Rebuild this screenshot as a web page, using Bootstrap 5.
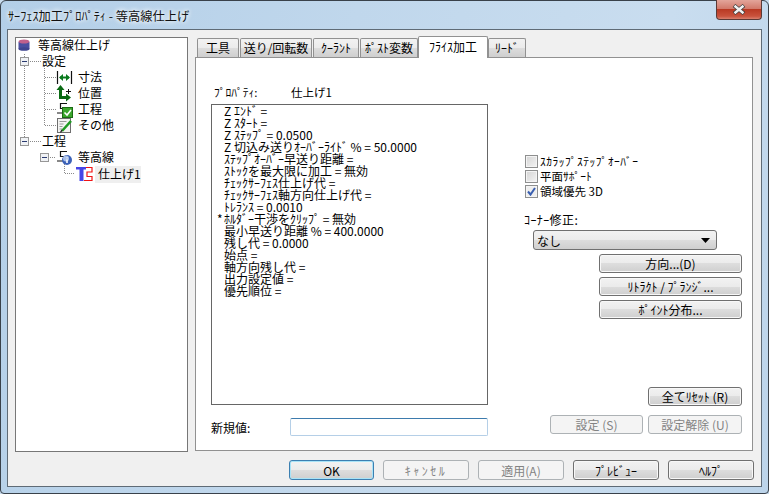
<!DOCTYPE html>
<html lang="ja">
<head>
<meta charset="utf-8">
<title>サーフェス加工プロパティ</title>
<link href="https://cdn.jsdelivr.net/npm/bootstrap@5.3.0/dist/css/bootstrap.min.css" rel="stylesheet">
<style>
html,body{margin:0;width:769px;height:494px;overflow:hidden;background:#c8dcee}
body,.wbtn,.wsel,.winput{font-family:"Noto Sans CJK JP","Liberation Sans",sans-serif;font-size:12px;line-height:13px;color:#000}
.wframe{width:769px;height:494px;border:1px solid #39414a;border-radius:6px 6px 4px 4px;background:linear-gradient(105deg,#b3cfe8 0%,#c0d7ec 40%,#c9ddef 75%,#bcd4ea 100%);padding:0 6px 6px;display:flex;flex-direction:column}
.wtitle{height:28px;flex:none;display:flex;align-items:flex-start}
.wtitle-text{padding:8px 0 0 1px;font-size:12.25px;line-height:14px;color:#111;text-shadow:0 0 5px #fff,0 0 5px #fff}
.wclose{width:46px;height:20px;margin:-1px 0 0 auto;border:1px solid #5b3a36;border-top:0;border-radius:0 0 4px 4px;background:linear-gradient(#e3a59a 0%,#d27a6b 45%,#b93a24 50%,#c9523c 85%,#d9806e 100%);display:flex;align-items:center;justify-content:center}
.wclient{flex:1;border:1px solid #5f6b76;background:#f0f0f0;padding:6px 7px 0;display:flex;flex-direction:column}
.wtop{display:flex;gap:7px;height:415px}
.wtree{width:173px;height:415px;margin-top:1px;background:#fff;border:1px solid #777;flex:none}
.trow{height:16px;display:flex;align-items:center;white-space:nowrap;line-height:14px;font-size:12px}
.trow svg{flex:none;overflow:visible;display:block}
.trow span{margin-bottom:3px}
.trow span.tsel{background:#efefef;padding:1px 3px 2px;margin-bottom:0;width:46px}
.wtabs{width:558px;flex:none;display:flex;flex-direction:column}
.wtabs .nav-tabs{border:0;padding-left:2px;height:21px;align-items:flex-end;flex-wrap:nowrap;margin-bottom:0}
.wtabs .nav-link{height:19px;margin:0 1px 0 0;padding:2px 0 0;text-align:center;border:1px solid #919191;border-bottom:0;border-radius:2px 2px 0 0;background:linear-gradient(#f2f2f2 0%,#ebebeb 50%,#dddddd 50%,#cfcfcf 100%);color:#000;line-height:14px;font-size:12px;white-space:nowrap}
.wtabs .nav-link.active{height:22px;margin:0 0 -1px -1px;padding-top:3px;background:#fff;border-color:#919191;color:#000;position:relative;z-index:2}
.tw1{width:42px}.tw2{width:72px}.tw3{width:46px}.tw4{width:58px}.tw5{width:70px}.tw6{width:38px}
.wpanel{height:394px;background:#fff;border:1px solid #919191;padding:28px 10px 0 15px;display:flex}
.wleft{width:277px;flex:none}
.wprop{height:18px;display:flex;font-size:11.5px}
.wprop-k{width:80px;padding-left:3px}
.wlist{height:301px;border:1px solid #666;padding:0;white-space:nowrap}
.wline{height:12px;line-height:12px;padding-left:5px;display:flex;font-size:12px}
.wmark{width:7px;flex:none}
.wnew{display:flex;align-items:center;margin-top:13px}
.wnew-k{width:79px;flex:none}
.winput.form-control{width:198px;height:18px;min-height:0;padding:0 3px;border:1px solid #b5cfe7;border-top-color:#3d7bad;border-radius:2px;background:#fff;box-shadow:none}
.wright{width:218px;margin-left:36px;flex:none;display:flex;flex-direction:column;height:349px}
.wchk{height:15px;display:flex;align-items:center;margin:0;padding:0;min-height:0}
.wchk:first-child{margin-top:68px}
.wchk .form-check-input{width:13px;height:13px;margin:0 2px 0 1px;float:none;flex:none;border:1px solid #8e8f8f;border-radius:0;background:linear-gradient(135deg,#d4d4d4,#f4f4f4);box-shadow:inset 0 0 0 1px #f4f4f4;opacity:1}
.wchk .form-check-input:checked{background-color:#eee;background-image:url("data:image/svg+xml,%3Csvg xmlns='http://www.w3.org/2000/svg' viewBox='0 0 13 13'%3E%3Cpath d='M3 6.500l2.500 3L10 3' fill='none' stroke='%233a5fb0' stroke-width='2'/%3E%3C/svg%3E");background-size:13px 13px;background-position:center;border-color:#8e8f8f}
.wchk .form-check-label{line-height:15px;font-size:11.5px;opacity:1}
.wtight{letter-spacing:.5px}
.wcorner{height:13px;margin-top:14px;margin-bottom:1px;font-size:12px;letter-spacing:.4px}
.wsel.form-select{width:184px;height:20px;min-height:0;margin:3px 0 0 9px;padding:0 3px;border:1px solid #707070;border-radius:3px;line-height:17px;box-shadow:none;background-color:#e6e6e6;background-image:url("data:image/svg+xml,%3Csvg xmlns='http://www.w3.org/2000/svg' viewBox='0 0 9 5'%3E%3Cpath d='M0 0h9L4.500 5z'/%3E%3C/svg%3E"),linear-gradient(#f2f2f2 0%,#ebebeb 50%,#dddddd 50%,#cfcfcf 100%);background-repeat:no-repeat;background-size:9px 5px,100% 100%;background-position:right 6px center,0 0}
.wbtn.btn{height:19px;padding:0;border:1px solid #707070;border-radius:3px;line-height:16px;color:#000;background:linear-gradient(#f2f2f2 0%,#ebebeb 50%,#dddddd 50%,#cfcfcf 100%);box-shadow:inset 0 0 0 1px #f8f8f8;white-space:nowrap;font-size:12px;opacity:1}
.wbtn.btn.disabled,.wbtn.btn:disabled{background:#f4f4f4;border-color:#adb2b5;color:#838383;box-shadow:none;opacity:1}
.wbtn.wdef{border-color:#3c7fb1;box-shadow:inset 0 0 0 1px #a8e3f7}
.wb-wide{width:143px;margin-left:75px;margin-top:4px}
.wb-mid{width:94px}
.wb-set{width:93px}
.wbot{margin-top:auto;margin-bottom:1px}
.wbotrow{display:flex;justify-content:flex-end;gap:5px;margin-top:9px}
.wfoot{display:flex;justify-content:flex-end;gap:9px;margin-top:9px}
.wfoot .wbtn{width:86px;height:20px;line-height:17px}
.wfoot .wdef{width:85px}
.wwide-kana{letter-spacing:2.500px}
</style>
</head>
<body>
<div class="wframe">
  <div class="wtitle">
    <div class="wtitle-text">ｻｰﾌｪｽ加工ﾌﾟﾛﾊﾟﾃｨ - 等高線仕上げ</div>
    <div class="wclose"><svg width="16" height="11" viewBox="0 0 16 11"><path d="M3 1.500L13 9.500M13 1.500L3 9.500" stroke="#3d3d3d" stroke-width="4"/><path d="M3.500 1.800L12.500 9.200M12.500 1.800L3.500 9.200" stroke="#f2f2f2" stroke-width="2.400"/></svg></div>
  </div>
  <div class="wclient">
    <div class="wtop">
      <div class="wtree">
        <div class="trow"><svg width="22" height="16" viewBox="0 0 22 16"><rect x="2.500" y="4" width="11" height="7" fill="#4a4fa0"/><ellipse cx="8" cy="11" rx="5.500" ry="1.800" fill="#3f4590"/><ellipse cx="8" cy="3.500" rx="5.500" ry="2" fill="#c0608c"/></svg><span>等高線仕上げ</span></div>
        <div class="trow"><svg width="26" height="16" viewBox="0 0 26 16"><path d="M8.500 0V3M8.500 12V16M14 7.500H25" stroke="#8a8a8a" stroke-dasharray="1 1" fill="none"/><path d="M28.500 12V16" stroke="#8a8a8a" stroke-dasharray="1 1"/><rect x="4.500" y="3.500" width="8" height="8" fill="#f0f2f5" stroke="#979797"/><path d="M6 7.500h5" stroke="#2a3a70"/></svg><span>設定</span></div>
        <div class="trow"><svg width="62" height="16" viewBox="0 0 62 16"><path d="M8.500 0V16M28.500 0V16M29 7.500H40" stroke="#8a8a8a" stroke-dasharray="1 1" fill="none"/><path d="M41.500 1V14M55.500 1V14" stroke="#111" stroke-width="1.200"/><path d="M44 7.500H53" stroke="#0a7a1e" stroke-width="2"/><path d="M47 4L43 7.500L47 11zM50 4L54 7.500L50 11z" fill="#0a7a1e"/></svg><span>寸法</span></div>
        <div class="trow"><svg width="62" height="16" viewBox="0 0 62 16"><path d="M8.500 0V16M28.500 0V16M29 7.500H40" stroke="#8a8a8a" stroke-dasharray="1 1" fill="none"/><path d="M44.500 3V11.500H51" stroke="#0a6a14" stroke-width="3" fill="none"/><path d="M40.500 4L44.500 -1L48.500 4zM50 7.500L55 11.500L50 15.500z" fill="#0a6a14"/><path d="M50 5.500h5M52.500 3v5" stroke="#111"/></svg><span>位置</span></div>
        <div class="trow"><svg width="62" height="16" viewBox="0 0 62 16"><path d="M8.500 0V16M28.500 0V16M29 7.500H40" stroke="#8a8a8a" stroke-dasharray="1 1" fill="none"/><path d="M44 1.500H51M44.500 1V6.500H51V11H41" stroke="#111" stroke-width="1.200" fill="none"/><rect x="46.500" y="5.500" width="10" height="10" fill="#3aa52c" stroke="#1a6a14"/><path d="M48.500 10.500L51 13L55 8" stroke="#fff" stroke-width="1.600" fill="none"/></svg><span>工程</span></div>
        <div class="trow"><svg width="62" height="16" viewBox="0 0 62 16"><path d="M8.500 0V16M28.500 0V7.500H40" stroke="#8a8a8a" stroke-dasharray="1 1" fill="none"/><rect x="41.500" y="0.500" width="13" height="14" fill="#f4f4f2" stroke="#6e6e6e"/><path d="M43.500 3.500h7M43.500 6h4M43.500 8.500h3M43.500 11h3" stroke="#9a9a9a"/><path d="M46 13L55 3" stroke="#1f9a22" stroke-width="2.600"/><path d="M44.500 14.500L46 12" stroke="#222" stroke-width="1.400"/></svg><span>その他</span></div>
        <div class="trow"><svg width="26" height="16" viewBox="0 0 26 16"><path d="M8.500 0V3M14 7.500H25" stroke="#8a8a8a" stroke-dasharray="1 1" fill="none"/><rect x="4.500" y="3.500" width="8" height="8" fill="#f0f2f5" stroke="#979797"/><path d="M6 7.500h5" stroke="#2a3a70"/></svg><span>工程</span></div>
        <div class="trow"><svg width="62" height="16" viewBox="0 0 62 16"><path d="M34 7.500H40" stroke="#8a8a8a" stroke-dasharray="1 1" fill="none"/><path d="M48.500 12V16" stroke="#8a8a8a" stroke-dasharray="1 1"/><rect x="24.500" y="3.500" width="8" height="8" fill="#f0f2f5" stroke="#979797"/><path d="M26 7.500h5" stroke="#2a3a70"/><path d="M44 1.500H51M44.500 1V6.500H51V11H41" stroke="#111" stroke-width="1.200" fill="none"/><circle cx="51" cy="10" r="5" fill="#3c62b8"/><circle cx="50" cy="8.500" r="3" fill="#a9c0ea"/><path d="M51 7.500v.8M51 9.500v3.500" stroke="#fff" stroke-width="1.600"/></svg><span>等高線</span></div>
        <div class="trow"><svg width="79" height="16" viewBox="0 0 79 16"><path d="M48.500 0V7.500H59" stroke="#8a8a8a" stroke-dasharray="1 1" fill="none"/><path d="M60 1H70V3.500H67.500V15H63.500V3.500H60z" fill="#4646e6"/><path d="M70 1.500H76V6H71V10.500H76V14.500H68" stroke="#f01414" stroke-width="1.200" fill="none"/></svg><span class="tsel">仕上げ1</span></div>
      </div>
      <div class="wtabs">
        <ul class="nav nav-tabs">
          <li class="nav-item"><a class="nav-link tw1" href="#">工具</a></li>
          <li class="nav-item"><a class="nav-link tw2" href="#">送り/回転数</a></li>
          <li class="nav-item"><a class="nav-link tw3" href="#">ｸｰﾗﾝﾄ</a></li>
          <li class="nav-item"><a class="nav-link tw4" href="#">ﾎﾟｽﾄ変数</a></li>
          <li class="nav-item"><a class="nav-link tw5 active" href="#">ﾌﾗｲｽ加工</a></li>
          <li class="nav-item"><a class="nav-link tw6" href="#">ﾘｰﾄﾞ</a></li>
        </ul>
        <div class="wpanel">
          <div class="wleft">
            <div class="wprop"><div class="wprop-k">ﾌﾟﾛﾊﾟﾃｨ:</div><div>仕上げ1</div></div>
            <div class="wlist">
              <div class="wline"><span class="wmark"></span><span>Z ｴﾝﾄﾞ =</span></div>
              <div class="wline"><span class="wmark"></span><span>Z ｽﾀｰﾄ =</span></div>
              <div class="wline"><span class="wmark"></span><span>Z ｽﾃｯﾌﾟ = 0.0500</span></div>
              <div class="wline"><span class="wmark"></span><span>Z 切込み送りｵｰﾊﾞｰﾗｲﾄﾞ % = 50.0000</span></div>
              <div class="wline"><span class="wmark"></span><span>ｽﾃｯﾌﾟｵｰﾊﾞｰ早送り距離 =</span></div>
              <div class="wline"><span class="wmark"></span><span>ｽﾄｯｸを最大限に加工 = 無効</span></div>
              <div class="wline"><span class="wmark"></span><span>ﾁｪｯｸｻｰﾌｪｽ仕上げ代 =</span></div>
              <div class="wline"><span class="wmark"></span><span>ﾁｪｯｸｻｰﾌｪｽ軸方向仕上げ代 =</span></div>
              <div class="wline"><span class="wmark"></span><span>ﾄﾚﾗﾝｽ = 0.0010</span></div>
              <div class="wline"><span class="wmark">*</span><span>ﾎﾙﾀﾞｰ干渉をｸﾘｯﾌﾟ = 無効</span></div>
              <div class="wline"><span class="wmark"></span><span>最小早送り距離 % = 400.0000</span></div>
              <div class="wline"><span class="wmark"></span><span>残し代 = 0.0000</span></div>
              <div class="wline"><span class="wmark"></span><span>始点 =</span></div>
              <div class="wline"><span class="wmark"></span><span>軸方向残し代 =</span></div>
              <div class="wline"><span class="wmark"></span><span>出力設定値 =</span></div>
              <div class="wline"><span class="wmark"></span><span>優先順位 =</span></div>
            </div>
            <div class="wnew"><label class="wnew-k" for="newval">新規値:</label><input id="newval" class="form-control winput" type="text"></div>
          </div>
          <div class="wright">
            <div class="form-check wchk"><input class="form-check-input" type="checkbox" id="c1"><label class="form-check-label wtight" for="c1">ｽｶﾗｯﾌﾟｽﾃｯﾌﾟｵｰﾊﾞｰ</label></div>
            <div class="form-check wchk"><input class="form-check-input" type="checkbox" id="c2"><label class="form-check-label" for="c2">平面ｻﾎﾟｰﾄ</label></div>
            <div class="form-check wchk"><input class="form-check-input" type="checkbox" id="c3" checked><label class="form-check-label" for="c3">領域優先 3D</label></div>
            <div class="wcorner">ｺｰﾅｰ修正:</div>
            <select class="form-select wsel" aria-label="ｺｰﾅｰ修正"><option>なし</option></select>
            <button type="button" class="btn wbtn wb-wide">方向...(D)</button>
            <button type="button" class="btn wbtn wb-wide">ﾘﾄﾗｸﾄ / ﾌﾟﾗﾝｼﾞ...</button>
            <button type="button" class="btn wbtn wb-wide">ﾎﾟｲﾝﾄ分布...</button>
            <div class="wbot">
              <div class="d-flex justify-content-end"><button type="button" class="btn wbtn wb-mid">全てﾘｾｯﾄ (R)</button></div>
              <div class="wbotrow"><button type="button" class="btn wbtn wb-set" disabled>設定 (S)</button><button type="button" class="btn wbtn wb-mid" disabled>設定解除 (U)</button></div>
            </div>
          </div>
        </div>
      </div>
    </div>
    <div class="wfoot">
      <button type="button" class="btn wbtn wdef">OK</button>
      <button type="button" class="btn wbtn wwide-kana" disabled>ｷｬﾝｾﾙ</button>
      <button type="button" class="btn wbtn" disabled>適用(A)</button>
      <button type="button" class="btn wbtn">ﾌﾟﾚﾋﾞｭｰ</button>
      <button type="button" class="btn wbtn">ﾍﾙﾌﾟ</button>
    </div>
  </div>
</div>
<script src="https://cdn.jsdelivr.net/npm/bootstrap@5.3.0/dist/js/bootstrap.bundle.min.js"></script>
</body>
</html>
